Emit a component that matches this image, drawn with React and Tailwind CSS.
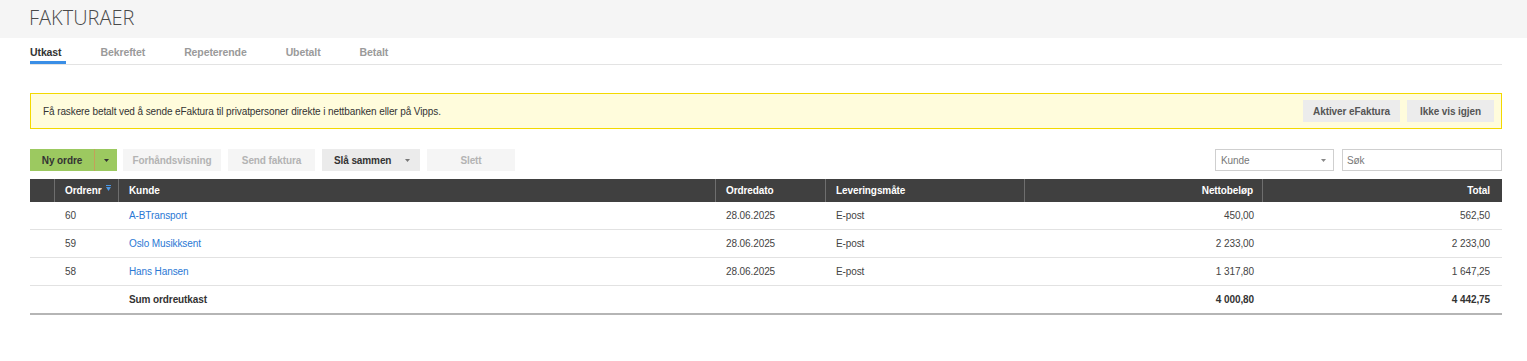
import React from "react";

const rows = [
  { nr: "60", kunde: "A-BTransport", dato: "28.06.2025", lev: "E-post", netto: "450,00", total: "562,50" },
  { nr: "59", kunde: "Oslo Musikksent", dato: "28.06.2025", lev: "E-post", netto: "2 233,00", total: "2 233,00" },
  { nr: "58", kunde: "Hans Hansen", dato: "28.06.2025", lev: "E-post", netto: "1 317,80", total: "1 647,25" },
];

const grid = "grid grid-cols-[25px_64px_597px_110px_199px_238px_239px]";

function Caret({ color = "#444" }) {
  return (
    <svg width="5" height="3" viewBox="0 0 5 3">
      <path d="M0 0H5L2.5 3Z" fill={color} />
    </svg>
  );
}

export default function App() {
  return (
    <div className="w-[1527px] min-h-[361px] bg-white font-['Liberation_Sans',Arial,sans-serif] text-[10px] tracking-[-0.1px] text-[#444]">
      <div className="h-[38px] bg-[#f5f5f5] pl-[29px] pt-[6px]">
        <h1 className="font-['Open_Sans',sans-serif] font-light text-[20px] leading-[24px] tracking-normal text-[#4a4a4a]">FAKTURAER</h1>
      </div>

      <div className="pl-[30px] pr-[25px]">
        <div className="flex gap-[35px] border-b border-[#e3e3e3]">
          {["Utkast", "Bekreftet", "Repeterende", "Ubetalt", "Betalt"].map((t, i) => (
            <div
              key={t}
              className={
                "pt-[7px] pb-[2px] pr-[4px] leading-[14px] font-bold text-[10.5px] border-b-[3px] " +
                (i === 0 ? "text-[#333] border-[#3a8ee6]" : "text-[#9a9a9a] border-transparent")
              }
            >
              {t}
            </div>
          ))}
        </div>

        <div className="mt-[28px] h-[36px] border border-[#f3d900] bg-[#fffcdc] flex items-center justify-between pl-[12px] pr-[7px]">
          <span className="text-[#333]">Få raskere betalt ved å sende eFaktura til privatpersoner direkte i nettbanken eller på Vipps.</span>
          <div className="flex gap-[7px]">
            <button className="h-[22px] w-[97px] bg-[#ececec] font-bold text-[#555]">Aktiver eFaktura</button>
            <button className="h-[22px] w-[87px] bg-[#ececec] font-bold text-[#555]">Ikke vis igjen</button>
          </div>
        </div>

        <div className="mt-[20px] h-[22px] flex items-stretch justify-between">
          <div className="flex items-stretch">
            <div className="flex items-stretch bg-[#9cc960]">
              <button className="w-[65px] font-bold text-[#333] border-r border-[#c4a05a]">Ny ordre</button>
              <div className="w-[22px] flex items-center justify-center">
                <Caret color="#333" />
              </div>
            </div>
            <button className="ml-[6px] w-[98px] bg-[#f5f5f5] font-bold text-[#b3b3b3]">Forhåndsvisning</button>
            <button className="ml-[7px] w-[87px] bg-[#f5f5f5] font-bold text-[#b3b3b3]">Send faktura</button>
            <button className="ml-[7px] w-[98px] bg-[#ebebeb] font-bold text-[#333] flex items-center pl-[12px] pr-[10px] justify-between">
              <span>Slå sammen</span>
              <Caret color="#777" />
            </button>
            <button className="ml-[7px] w-[88px] bg-[#f5f5f5] font-bold text-[#b3b3b3]">Slett</button>
          </div>
          <div className="flex items-stretch gap-[8px]">
            <div className="w-[119px] border border-[#cfcfcf] flex items-center justify-between pl-[5px] pr-[7px] text-[#777]">
              <span>Kunde</span>
              <Caret color="#888" />
            </div>
            <div className="w-[160px] border border-[#cfcfcf] flex items-center pl-[4px] text-[#777]">Søk</div>
          </div>
        </div>

        <div className="mt-[8px] border-b-2 border-[#b5b5b5]">
          <div className={grid + " h-[23px] bg-[#404040] text-white font-bold"}>
            <div className="border-r border-[#6e6e6e]" />
            <div className="border-r border-[#6e6e6e] flex items-center pl-[10px] gap-[4px]">
              <span>Ordrenr</span>
              <svg width="5" height="7" viewBox="0 0 5 7" className="-mt-[4px]">
                <rect x="0" y="0" width="5" height="1" fill="#4c97e4" />
                <path d="M0 2H5L2.5 6Z" fill="#4c97e4" />
              </svg>
            </div>
            <div className="border-r border-[#6e6e6e] flex items-center pl-[10px]">Kunde</div>
            <div className="border-r border-[#6e6e6e] flex items-center pl-[10px]">Ordredato</div>
            <div className="border-r border-[#6e6e6e] flex items-center pl-[10px]">Leveringsmåte</div>
            <div className="border-r border-[#6e6e6e] flex items-center justify-end pr-[9px]">Nettobeløp</div>
            <div className="flex items-center justify-end pr-[12px]">Total</div>
          </div>
          {rows.map((r) => (
            <div key={r.nr} className={grid + " h-[28px] border-b border-[#e2e2e2] items-center"}>
              <div />
              <div className="pl-[10px]">{r.nr}</div>
              <div className="pl-[10px] text-[#2a78d4]">{r.kunde}</div>
              <div className="pl-[10px]">{r.dato}</div>
              <div className="pl-[10px]">{r.lev}</div>
              <div className="text-right pr-[9px]">{r.netto}</div>
              <div className="text-right pr-[12px]">{r.total}</div>
            </div>
          ))}
          <div className={grid + " h-[27px] items-center font-bold text-[#333]"}>
            <div />
            <div />
            <div className="pl-[10px]">Sum ordreutkast</div>
            <div />
            <div />
            <div className="text-right pr-[9px]">4 000,80</div>
            <div className="text-right pr-[12px]">4 442,75</div>
          </div>
        </div>
      </div>
    </div>
  );
}
